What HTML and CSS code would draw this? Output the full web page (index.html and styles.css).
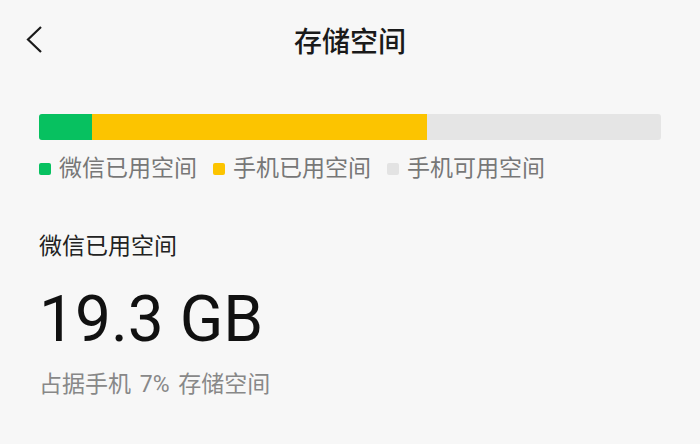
FILE: index.html
```html
<!DOCTYPE html>
<html lang="zh-CN">
  <head>
    <meta charset="UTF-8" />
    <title>存储空间</title>
    <link rel="stylesheet" href="styles.css">
  </head>
  <body>
    <div class="header">
      <svg class="back" width="22" height="30" viewBox="0 0 22 30">
        <polyline points="19,2 6,14.5 19,27" fill="none" stroke="#1a1a1a" stroke-width="2.2" />
      </svg>
      <h1 class="title">存储空间</h1>
      <div class="spacer"></div>
    </div>

    <div class="content">
      <div class="usage-bar">
        <div class="seg seg-wechat" style="width: 8.5%"></div>
        <div class="seg seg-phone" style="width: 53.9%"></div>
      </div>

      <div class="legend">
        <div class="legend-item"><span class="dot dot-wechat"></span>微信已用空间</div>
        <div class="legend-item"><span class="dot dot-phone"></span>手机已用空间</div>
        <div class="legend-item"><span class="dot dot-free"></span>手机可用空间</div>
      </div>

      <div class="section-label">微信已用空间</div>
      <div class="big-size">19.3 GB</div>
      <div class="sub-note">占据手机 7% 存储空间</div>
    </div>
  </body>
</html>
```

FILE: styles.css
```css
body {
  margin: 0;
  background: #f7f7f7;
  font-family: Roboto, "Noto Sans CJK SC", sans-serif;
  color: #1a1a1a;
}

.header {
  height: 80px;
  display: flex;
  align-items: center;
  padding: 0 22px;
}

.back {
  width: 22px;
  height: 30px;
}

.title {
  flex: 1;
  margin: 0;
  text-align: center;
  font-size: 28px;
  font-weight: 500;
  color: #1a1a1a;
}

.spacer {
  width: 22px;
}

.content {
  padding: 0 39px;
}

.usage-bar {
  margin-top: 34px;
  height: 26px;
  display: flex;
  background: #e5e5e5;
  border-radius: 3px;
  overflow: hidden;
}

.seg-wechat {
  background: #07c160;
}

.seg-phone {
  background: #fcc400;
}

.legend {
  margin-top: 14px;
  display: flex;
  gap: 16px;
  font-size: 23px;
  line-height: 30px;
  color: #777;
}

.legend-item {
  display: flex;
  align-items: center;
  gap: 8px;
}

.dot {
  width: 12px;
  height: 12px;
  border-radius: 2px;
}

.dot-wechat {
  background: #07c160;
}

.dot-phone {
  background: #fcc400;
}

.dot-free {
  background: #e3e3e3;
}

.section-label {
  margin-top: 48px;
  font-size: 23px;
  line-height: 30px;
  color: #222;
}

.big-size {
  margin-top: 20px;
  font-size: 64px;
  line-height: 75px;
  font-weight: 400;
  color: #111;
}

.sub-note {
  margin-top: 13px;
  font-size: 23px;
  line-height: 30px;
  word-spacing: 3px;
  color: #888;
}
```
